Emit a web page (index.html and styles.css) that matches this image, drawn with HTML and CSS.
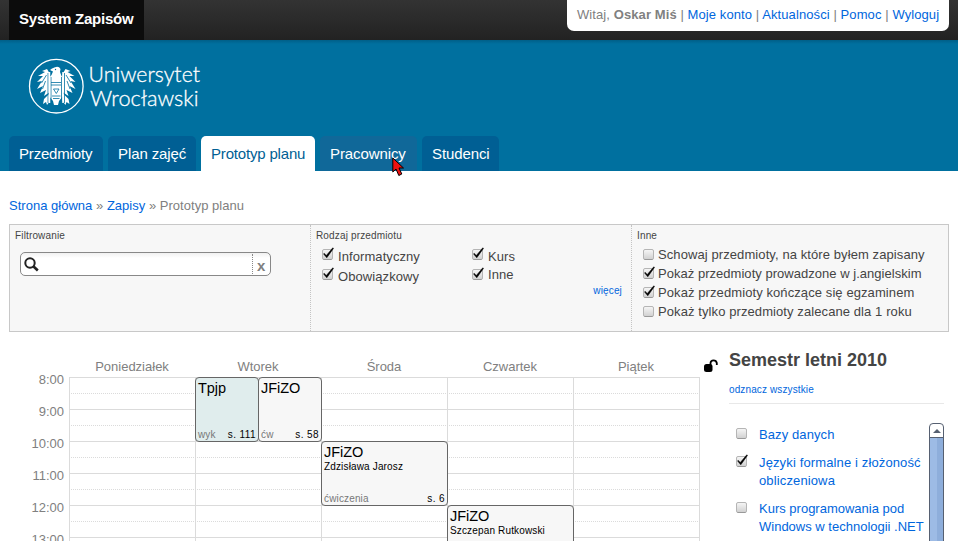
FILE: index.html
```html
<!DOCTYPE html>
<html lang="pl">
<head>
<meta charset="utf-8">
<title>System Zapisów</title>
<link rel="stylesheet" href="styles.css">
</head>
<body>
<svg class="defs" width="0" height="0">
  <defs>
    <linearGradient id="box-fill" x1="0" y1="0" x2="0" y2="1"><stop offset="0" stop-color="#f7f7f7"/><stop offset="1" stop-color="#cfcfcf"/></linearGradient>
    <symbol id="box" viewBox="0 0 14 14"><rect x="1.5" y="2.5" width="10" height="10" rx="1.5" fill="url(#box-fill)" stroke="#b5b5b5"/><path d="M2.5 12.5h8" stroke="#999"/></symbol>
    <symbol id="box-on" viewBox="0 0 14 14"><use href="#box"/><path d="M3 6.2L5.3 8.5L11.8 .8L12.5 1.4L5.8 10.8L2.8 7.3z" fill="#000" stroke="#000" stroke-width=".5"/></symbol>
  </defs>
</svg>
<header class="top">
  <a class="brand">System Zapisów</a>
  <div class="user">Witaj, <b>Oskar Miś</b> | <a>Moje konto</a> | <a>Aktualności</a> | <a>Pomoc</a> | <a>Wyloguj</a></div>
</header>
<div class="banner">
  <svg class="logo" width="180" height="60" viewBox="0 0 180 60">
    <circle cx="28.3" cy="28.2" r="26.8" fill="none" stroke="#fff" stroke-width="1.3"/>
    <g fill="#fff">
      <path d="M24 10.5L27 9.2Q31 8 32.5 11L32 14L33.5 18L35 20V38L31 43L30 47H26L25 43L21 38V20L23.5 17L25 13.5L22 12z"/>
      <path d="M19 11L14 13L17 14L10 18L15 18L9 24L14 23L9 31L15 28L12 35L18 32L16 38L22 34V16z"/>
      <path d="M37.500 11L42.500 13L39.500 14L46.500 18L41.500 18L47.500 24L42.500 23L47.500 31L41.500 28L44.500 35L38.500 32L40.500 38L34.500 34V16z"/>
      <path d="M22 35L16 41L15 46L18 44L19 47L22 43zM34.500 35L40.500 41L41.500 46L38.500 44L37.500 47L34.500 43z"/>
    </g>
    <g fill="none" stroke="#00709f" stroke-width=".8">
      <path d="M18.500 17L13.500 25M17.500 23L14.500 31M38 17L43 25M39 23L42 31M20 15V45M23 19V44M33.500 19V44M36.500 15V45M23 24.500h10M23 27h10M25.500 31h5.500l-2.700 4.500zM24 38h8.500M25 40.500h6.500" />
    </g>
    <path d="M21.500 14V45M35 14V45" stroke="#fff" stroke-width="1.500"/>
    <circle cx="27.500" cy="11.500" r=".7" fill="#00709f"/>
    <text class="logo-text" x="60.500" y="24" textLength="111.500" lengthAdjust="spacingAndGlyphs">Uniwersytet</text>
    <text class="logo-text" x="62" y="47.500" textLength="108.500" lengthAdjust="spacingAndGlyphs">Wrocławski</text>
  </svg>
  <nav class="tabs">
    <a class="tab t1">Przedmioty</a><a class="tab t2">Plan zajęć</a><a class="tab t3 active">Prototyp planu</a><a class="tab t4 hover">Pracownicy<svg class="cursor" width="14" height="20" viewBox="0 0 14 20"><path d="M.8 1V15L4 12L6.800 18.500L9.800 17L7 11H11.500z" fill="#e11" stroke="#000" stroke-width="1"/></svg></a><a class="tab t5">Studenci</a>
  </nav>
</div>
<main>
  <div class="crumbs"><a>Strona główna</a> » <a>Zapisy</a> » Prototyp planu</div>
  <section class="filters">
    <div class="panel p1">
      <h4>Filtrowanie</h4>
      <div class="search">
        <svg width="16" height="16" viewBox="0 0 16 16"><circle cx="6" cy="6" r="4.700" fill="none" stroke="#222" stroke-width="2"/><path d="M9.300 9.300L13.800 13.500" stroke="#222" stroke-width="2.600"/></svg>
        <span class="clear">x</span>
      </div>
    </div>
    <div class="panel p2">
      <h4>Rodzaj przedmiotu</h4>
      <div class="kinds">
        <div class="kcol">
          <label class="k"><svg class="cb"><use href="#box-on"/></svg><span>Informatyczny</span></label>
          <label class="k"><svg class="cb"><use href="#box-on"/></svg><span>Obowiązkowy</span></label>
        </div>
        <div class="kcol">
          <label class="k"><svg class="cb"><use href="#box-on"/></svg><span>Kurs</span></label>
          <label class="k high"><svg class="cb"><use href="#box-on"/></svg><span>Inne</span></label>
        </div>
      </div>
      <a class="more">więcej</a>
    </div>
    <div class="panel p3">
      <h4>Inne</h4>
      <div class="others">
        <label><svg class="cb"><use href="#box"/></svg><span>Schowaj przedmioty, na które byłem zapisany</span></label>
        <label><svg class="cb"><use href="#box-on"/></svg><span class="narrow">Pokaż przedmioty prowadzone w j.angielskim</span></label>
        <label><svg class="cb"><use href="#box-on"/></svg><span>Pokaż przedmioty kończące się egzaminem</span></label>
        <label><svg class="cb"><use href="#box"/></svg><span>Pokaż tylko przedmioty zalecane dla 1 roku</span></label>
      </div>
    </div>
  </section>
  <div class="content">
    <div class="schedule">
      <div class="days"><span>Poniedziałek</span><span>Wtorek</span><span>Środa</span><span>Czwartek</span><span>Piątek</span></div>
      <div class="body">
        <div class="hours"><span>8:00</span><span>9:00</span><span>10:00</span><span>11:00</span><span>12:00</span><span>13:00</span></div>
        <div class="cal">
          <i class="line r1"></i><i class="line half r2"></i><i class="line r3"></i><i class="line half r4"></i><i class="line r5"></i><i class="line half r6"></i><i class="line r7"></i><i class="line half r8"></i><i class="line r9"></i><i class="line half r10"></i><i class="line r11"></i>
          <i class="col c1"></i><i class="col c2"></i><i class="col c3"></i><i class="col c4"></i><i class="col c5"></i>
          <div class="pair">
            <div class="event teal"><h5>Tpjp</h5><footer><span>wyk</span><b>s. 111</b></footer></div>
            <div class="event"><h5>JFiZO</h5><footer><span>ćw</span><b>s. 58</b></footer></div>
          </div>
          <div class="event wed"><h5>JFiZO</h5><p>Zdzisława Jarosz</p><footer><span>ćwiczenia</span><b>s. 6</b></footer></div>
          <div class="event thu"><h5>JFiZO</h5><p>Szczepan Rutkowski</p></div>
        </div>
      </div>
    </div>
    <svg class="lock" width="16" height="14" viewBox="0 0 16 14"><rect x="1" y="5" width="8.500" height="8" rx="2.500"/><path d="M7.500 6V4Q7.700 1.300 10.500 1.300T13.800 4V6" fill="none" stroke="#000" stroke-width="1.800"/></svg>
    <aside>
      <h2>Semestr letni 2010</h2>
      <a class="uncheck">odznacz wszystkie</a>
      <div class="courses">
        <div class="list">
          <label><svg class="cb"><use href="#box"/></svg><a>Bazy danych</a></label>
          <label><svg class="cb"><use href="#box-on"/></svg><a class="wide">Języki formalne i złożoność<br>obliczeniowa</a></label>
          <label><svg class="cb"><use href="#box"/></svg><a>Kurs programowania pod<br>Windows w technologii .NET</a></label>
        </div>
        <div class="scroll"><div class="up"><i></i></div><div class="thumb"></div></div>
      </div>
    </aside>
  </div>
</main>
</body>
</html>
```

FILE: styles.css
```css
* { box-sizing: border-box; }
html, body { height: 541px; overflow: hidden; }
body { margin: 0; background: #fff; font: 13px/18px "Liberation Sans", Arial, sans-serif; color: #808080; }
a { color: #0066dd; text-decoration: none; }
h2, h4, h5, p { margin: 0; }
.defs { display: block; position: absolute; }
.top { height: 40px; display: flex; justify-content: space-between; align-items: flex-start; padding: 0 9px; background: linear-gradient(#333, #222); }
.brand { width: 135px; height: 40px; padding-left: 10px; line-height: 38px; font-size: 15px; font-weight: bold; letter-spacing: -.22px; color: #fff; background: #0c0c0c; white-space: nowrap; }
.user { width: 382px; height: 31px; padding-left: 10px; line-height: 30px; letter-spacing: .09px; background: #fff; border-radius: 0 0 7px 7px; white-space: nowrap; }
.banner { height: 131px; display: flex; flex-direction: column; justify-content: space-between; background: linear-gradient(#005f88, #00709f 4px); }
.logo { display: block; margin: 18px 0 0 28px; }
.logo-text { font: 300 22px Lato, sans-serif; fill: #fff; stroke: #fff; stroke-width: .3px; }
.tabs { display: flex; gap: 5px; padding-left: 9px; height: 35px; }
.tab { position: relative; padding-left: 10px; font-size: 15px; line-height: 36px; letter-spacing: -.18px; color: #fff; background: #005f94; border-radius: 5px 5px 0 0; white-space: nowrap; }
.t1 { width: 94px; } .t2 { width: 88px; } .t3 { width: 114px; } .t4 { width: 97px; } .t5 { width: 77px; }
.t4, .t5, .t2 { letter-spacing: -.1px; }
.tab.active { background: #fff; color: #005f94; }
.tab.hover { background: #106899; }
.cursor { position: absolute; left: 72px; top: 21px; z-index: 5; }
main { height: 370px; overflow: hidden; padding: 26px 9px 0; }
.crumbs { height: 27px; white-space: nowrap; letter-spacing: .02px; }
.filters { display: flex; width: 940px; height: 108px; border: 1px solid #c8c8c8; background: #f7f7f7; color: #444; }
.panel { padding: 5px 5px 0; border-left: 1px dotted #c4c4c4; }
.p1 { width: 300px; border-left: 0; }
.p2 { width: 321px; display: flex; flex-direction: column; }
.p3 { flex: 1; }
.panel h4 { font-size: 10px; font-weight: normal; line-height: 12px; letter-spacing: .15px; white-space: nowrap; }
.search { display: flex; width: 251px; height: 24px; margin: 10px 0 0 5px; padding: 3px 0 3px 3px; border: 1px solid #888; border-radius: 5px; background: linear-gradient(#f1f1f1, #fff 5px); }
.search svg { margin: 1px 0 0 0; }
.clear { margin: -2px 0 -2px auto; width: 18px; padding-left: 4px; border-left: 1px dotted #888; font-size: 15px; line-height: 24px; font-weight: bold; color: #808080; }
.cb { width: 14px; height: 14px; flex: none; display: block; }
label { display: flex; white-space: nowrap; }
.kinds { display: flex; margin: 5px 0 0 5px; }
.kcol { width: 150px; }
.k { height: 20px; }
.k span { margin: 0 0 0 3px; line-height: 20px; letter-spacing: .08px; }
.k.high span { margin-top: -2px; }
.more { font-size: 10px; line-height: 12px; margin: -2px 4px 0 0; align-self: flex-end; letter-spacing: .15px; }
.others { margin: 3px 0 0 5px; }
.others label { height: 19px; line-height: 19px; }
.others .cb { margin-top: 2px; }
.others span { margin-left: 2px; letter-spacing: .09px; }
.others .narrow { letter-spacing: .03px; }
.content { display: flex; align-items: flex-start; }
.schedule { width: 691px; padding-top: 26px; }
.days { display: grid; grid-template-columns: repeat(5, 126px); margin-left: 60px; height: 19px; text-align: center; line-height: 18px; }
.body { display: flex; }
.hours { width: 60px; display: flex; flex-direction: column; text-align: right; padding: 0 5px 0 0; }
.hours span { height: 32px; line-height: 6px; }
.cal { display: grid; width: 631px; grid-template-columns: repeat(5, 126px) 1px; grid-template-rows: repeat(11, 16px); }
.line { grid-column: 1 / 7; border-top: 1px solid #dbdbdb; }
.half { border-top-style: dotted; }
.r1 { grid-row: 1; } .r2 { grid-row: 2; } .r3 { grid-row: 3; } .r4 { grid-row: 4; } .r5 { grid-row: 5; } .r6 { grid-row: 6; }
.r7 { grid-row: 7; } .r8 { grid-row: 8; } .r9 { grid-row: 9; } .r10 { grid-row: 10; } .r11 { grid-row: 11; }
.col { grid-row: 1 / 12; border-left: 1px solid #dbdbdb; }
.c1 { grid-column: 1; } .c2 { grid-column: 2; } .c3 { grid-column: 3; } .c4 { grid-column: 4; }
.c5 { grid-column: 5 / 7; border-right: 1px solid #dbdbdb; }
.pair { grid-column: 2; grid-row: 1 / 5; display: flex; margin: 0 -1px -1px 0; z-index: 1; }
.pair .event { width: 64px; }
.pair .event + .event { margin-left: -1px; }
.event { display: flex; flex-direction: column; padding: 2px 2px 0; border: 1px solid #666; border-radius: 4px; background: #f7f7f7; color: #000; font-size: 10px; line-height: 12px; letter-spacing: .15px; z-index: 1; white-space: nowrap; }
.event.teal { background: #e0eded; }
.wed { grid-column: 3; grid-row: 5 / 9; margin: 0 -1px -1px 0; }
.thu { grid-column: 4; grid-row: 9 / 12; margin-right: -1px; }
.event h5 { font-size: 14.5px; font-weight: normal; line-height: 17px; letter-spacing: -.05px; }
.event footer { display: flex; justify-content: space-between; margin-top: auto; }
.event b { font-weight: normal; letter-spacing: .4px; }
.event span { color: #777; }
.lock { margin: 27px 0 0 3px; }
aside { width: 215px; margin: 16px 0 0 10px; }
h2 { font-size: 18px; line-height: 24px; color: #444; white-space: nowrap; }
.uncheck { display: block; height: 32px; font-size: 10px; line-height: 35px; letter-spacing: .12px; border-bottom: 1px solid #e8e8e8; }
.courses { display: flex; height: 150px; margin-top: 19px; }
.list { width: 200px; padding: 3px 0 0 6px; }
.list label { margin-bottom: 10px; }
.list .cb { margin-top: 0; }
.list a { margin-left: 10px; }
.list label:first-child a { letter-spacing: .1px; }
.list .wide { letter-spacing: .13px; }
.scroll { flex: none; width: 15px; height: 150px; border: 1px solid #566071; border-radius: 4px 4px 0 0; background: #fff; overflow: hidden; }
.up { height: 14px; border-bottom: 1px solid #566071; display: flex; justify-content: center; align-items: center; }
.up i { border: 4px solid transparent; border-top: 0; border-bottom-color: #566071; }
.thumb { height: 140px; background: linear-gradient(90deg, #9dbbe5 55%, #8eaedb 55%); }
```
